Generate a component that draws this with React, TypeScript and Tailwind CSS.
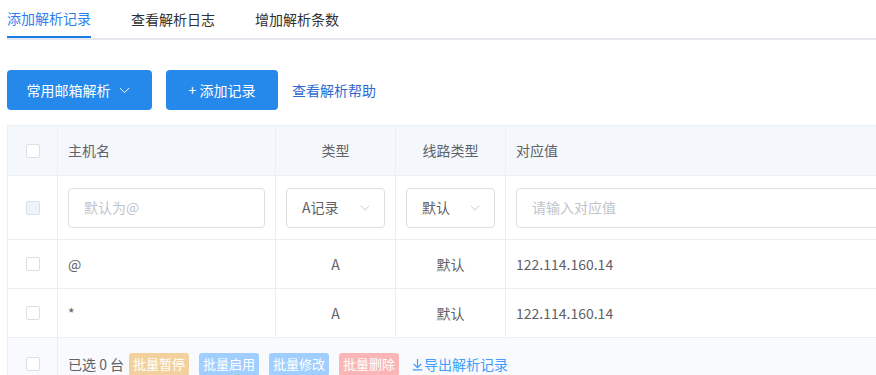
import React from "react";
import { ChevronDown } from "lucide-react";

const font = { fontFamily: '"Noto Sans CJK SC", "Noto Sans", sans-serif' };

function Checkbox({ disabled }: { disabled?: boolean }) {
  return (
    <span
      className={`block w-[14px] h-[14px] rounded-[2px] border border-[#dcdfe6] ${
        disabled ? "bg-[#edf2fc]" : "bg-white"
      }`}
    />
  );
}

function Select({ value, width }: { value: string; width: string }) {
  return (
    <div
      className={`${width} h-[40px] flex items-center justify-between pl-[15px] pr-[11px] border border-[#dcdfe6] rounded-[4px] text-[14px] text-[#606266]`}
    >
      <span>{value}</span>
      <ChevronDown size={16} strokeWidth={1.3} className="text-[#c0c4cc]" />
    </div>
  );
}

export default function App() {
  const rows = [
    { host: "@", type: "A", line: "默认", value: "122.114.160.14" },
    { host: "*", type: "A", line: "默认", value: "122.114.160.14" },
  ];
  const cols = "grid grid-cols-[50px_218px_120px_110px_1fr]";

  return (
    <div style={font} className="w-[876px] h-[375px] overflow-hidden bg-white pl-[7px]">
      {/* tabs */}
      <div className="flex gap-10 border-b-2 border-[#e4e7ed] text-[14px]">
        <div className="h-[38px] flex items-center -mb-[2px] border-b-2 border-[#1e7ce8] text-[#2d7ff0]">
          添加解析记录
        </div>
        <div className="h-[38px] flex items-center text-[#303133]">查看解析日志</div>
        <div className="h-[38px] flex items-center text-[#303133]">增加解析条数</div>
      </div>

      {/* actions */}
      <div className="flex items-center mt-[30px] text-[14px]">
        <button className="w-[145px] h-[40px] flex items-center justify-center gap-[5px] bg-[#2589ec] text-white rounded-[4px]">
          常用邮箱解析
          <ChevronDown size={17} strokeWidth={1.4} />
        </button>
        <button className="ml-[14px] w-[112px] h-[40px] flex items-center justify-center bg-[#2589ec] text-white rounded-[4px]">
          + 添加记录
        </button>
        <a className="ml-[14px] text-[#2d6ad2] text-[14px]">查看解析帮助</a>
      </div>

      {/* table */}
      <div className="mt-[15px] w-[1000px] border-l border-t border-[#ebeef5] text-[14px] text-[#606266]">
        <div className={`${cols} h-[50px] bg-[#f4f7fb] border-b border-[#ebeef5]`}>
          <div className="flex items-center justify-center border-r border-[#ebeef5]">
            <Checkbox />
          </div>
          <div className="flex items-center pl-[10px] border-r border-[#ebeef5]">主机名</div>
          <div className="flex items-center justify-center border-r border-[#ebeef5]">类型</div>
          <div className="flex items-center justify-center border-r border-[#ebeef5]">线路类型</div>
          <div className="flex items-center pl-[10px]">对应值</div>
        </div>

        <div className={`${cols} h-[64px] border-b border-[#ebeef5]`}>
          <div className="flex items-center justify-center border-r border-[#ebeef5]">
            <Checkbox disabled />
          </div>
          <div className="flex items-center pl-[10px] pr-[10px] border-r border-[#ebeef5]">
            <div className="w-full h-[40px] flex items-center px-[15px] border border-[#dcdfe6] rounded-[4px] text-[#c0c4cc]">
              默认为@
            </div>
          </div>
          <div className="flex items-center pl-[10px] border-r border-[#ebeef5]">
            <Select value="A记录" width="w-[99px]" />
          </div>
          <div className="flex items-center pl-[10px] border-r border-[#ebeef5]">
            <Select value="默认" width="w-[89px]" />
          </div>
          <div className="flex items-center pl-[10px]">
            <div className="w-full h-[40px] flex items-center px-[15px] border border-[#dcdfe6] rounded-[4px] text-[#c0c4cc]">
              请输入对应值
            </div>
          </div>
        </div>

        {rows.map((r, i) => (
          <div key={i} className={`${cols} h-[49px] border-b border-[#ebeef5]`}>
            <div className="flex items-center justify-center border-r border-[#ebeef5]">
              <Checkbox />
            </div>
            <div className="flex items-center pl-[10px] border-r border-[#ebeef5]">{r.host}</div>
            <div className="flex items-center justify-center border-r border-[#ebeef5]">{r.type}</div>
            <div className="flex items-center justify-center border-r border-[#ebeef5]">{r.line}</div>
            <div className="flex items-center pl-[10px]">{r.value}</div>
          </div>
        ))}

        <div className="grid grid-cols-[50px_1fr] h-[52px] bg-[#f8fafe]">
          <div className="flex items-center justify-center border-r border-[#ebeef5]">
            <Checkbox />
          </div>
          <div className="flex items-center pl-[10px]">
            <span className="mr-[5px]">已选 0 台</span>
            <span className="w-[60px] h-[23px] flex items-center justify-center rounded-[3px] bg-[#f3d19e] text-white text-[13px] mr-[10px]">
              批量暂停
            </span>
            <span className="w-[60px] h-[23px] flex items-center justify-center rounded-[3px] bg-[#a0cfff] text-white text-[13px] mr-[10px]">
              批量启用
            </span>
            <span className="w-[60px] h-[23px] flex items-center justify-center rounded-[3px] bg-[#a0cfff] text-white text-[13px] mr-[10px]">
              批量修改
            </span>
            <span className="w-[60px] h-[23px] flex items-center justify-center rounded-[3px] bg-[#fab6b6] text-white text-[13px] mr-[12px]">
              批量删除
            </span>
            <a className="flex items-center text-[#409eff] text-[14px]">
              <svg width="13" height="13" viewBox="0 0 12 12" fill="none" stroke="currentColor" strokeWidth="1.1">
                <path d="M6 1v8M2.5 5.5L6 9l3.5-3.5M1.5 11h9" />
              </svg>
              导出解析记录
            </a>
          </div>
        </div>
      </div>
    </div>
  );
}
